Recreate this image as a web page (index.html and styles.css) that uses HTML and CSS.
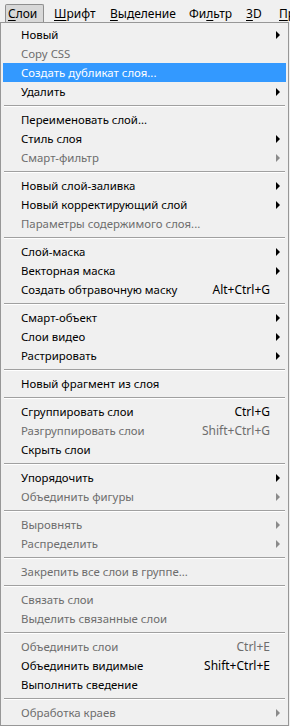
FILE: index.html
```html
<!DOCTYPE html>
<html>
<head>
	<meta charset="UTF-8">
	<title>Слои</title>
<link rel="stylesheet" href="styles.css">
</head>
<body>
<div class="menubar">
	<span class="tab open"><u>С</u>лои</span>
	<span class="tab t2"><u>Ш</u>рифт</span>
	<span class="tab t3"><u>В</u>ыделение</span>
	<span class="tab t4">Фи<u>л</u>ьтр</span>
	<span class="tab t5"><u>3</u>D</span>
	<span class="tab t6"><u>П</u>р</span>
</div>
<div class="menu">
	<div class="item sub"><span class="label">Новый</span><span class="key"></span><span class="arrow"></span></div>
	<div class="item off"><span class="label">Copy CSS</span><span class="key"></span><span class="arrow"></span></div>
	<div class="item hot"><span class="label">Создать дубликат слоя...</span><span class="key"></span><span class="arrow"></span></div>
	<div class="item sub"><span class="label">Удалить</span><span class="key"></span><span class="arrow"></span></div>
	<div class="sep"></div>
	<div class="item"><span class="label">Переименовать слой...</span><span class="key"></span><span class="arrow"></span></div>
	<div class="item sub"><span class="label">Стиль слоя</span><span class="key"></span><span class="arrow"></span></div>
	<div class="item sub off"><span class="label">Смарт-фильтр</span><span class="key"></span><span class="arrow"></span></div>
	<div class="sep"></div>
	<div class="item sub"><span class="label">Новый слой-заливка</span><span class="key"></span><span class="arrow"></span></div>
	<div class="item sub"><span class="label">Новый корректирующий слой</span><span class="key"></span><span class="arrow"></span></div>
	<div class="item off"><span class="label">Параметры содержимого слоя...</span><span class="key"></span><span class="arrow"></span></div>
	<div class="sep"></div>
	<div class="item sub"><span class="label">Слой-маска</span><span class="key"></span><span class="arrow"></span></div>
	<div class="item sub"><span class="label">Векторная маска</span><span class="key"></span><span class="arrow"></span></div>
	<div class="item"><span class="label">Создать обтравочную маску</span><span class="key">Alt+Ctrl+G</span><span class="arrow"></span></div>
	<div class="sep"></div>
	<div class="item sub"><span class="label">Смарт-объект</span><span class="key"></span><span class="arrow"></span></div>
	<div class="item sub"><span class="label">Слои видео</span><span class="key"></span><span class="arrow"></span></div>
	<div class="item sub"><span class="label">Растрировать</span><span class="key"></span><span class="arrow"></span></div>
	<div class="sep"></div>
	<div class="item"><span class="label">Новый фрагмент из слоя</span><span class="key"></span><span class="arrow"></span></div>
	<div class="sep"></div>
	<div class="item"><span class="label">Сгруппировать слои</span><span class="key">Ctrl+G</span><span class="arrow"></span></div>
	<div class="item off"><span class="label">Разгруппировать слои</span><span class="key">Shift+Ctrl+G</span><span class="arrow"></span></div>
	<div class="item"><span class="label">Скрыть слои</span><span class="key"></span><span class="arrow"></span></div>
	<div class="sep"></div>
	<div class="item sub"><span class="label">Упорядочить</span><span class="key"></span><span class="arrow"></span></div>
	<div class="item sub off"><span class="label">Объединить фигуры</span><span class="key"></span><span class="arrow"></span></div>
	<div class="sep"></div>
	<div class="item sub off"><span class="label">Выровнять</span><span class="key"></span><span class="arrow"></span></div>
	<div class="item sub off"><span class="label">Распределить</span><span class="key"></span><span class="arrow"></span></div>
	<div class="sep"></div>
	<div class="item off"><span class="label">Закрепить все слои в группе...</span><span class="key"></span><span class="arrow"></span></div>
	<div class="sep"></div>
	<div class="item off"><span class="label">Связать слои</span><span class="key"></span><span class="arrow"></span></div>
	<div class="item off"><span class="label">Выделить связанные слои</span><span class="key"></span><span class="arrow"></span></div>
	<div class="sep"></div>
	<div class="item off"><span class="label">Объединить слои</span><span class="key">Ctrl+E</span><span class="arrow"></span></div>
	<div class="item"><span class="label">Объединить видимые</span><span class="key">Shift+Ctrl+E</span><span class="arrow"></span></div>
	<div class="item"><span class="label">Выполнить сведение</span><span class="key"></span><span class="arrow"></span></div>
	<div class="sep"></div>
	<div class="item sub off"><span class="label">Обработка краев</span><span class="key"></span><span class="arrow"></span></div>
</div>
</body>
</html>
```

FILE: styles.css
```css
html{font:11.4px "Noto Sans","DejaVu Sans",sans-serif;color:#000;}
body{margin:0;width:290px;height:726px;overflow:hidden;background:#f0f0f0;}
.menubar{display:flex;height:22px;align-items:flex-end;white-space:nowrap;background:#f0f0f0;overflow:hidden;font-size:12px;}
.tab{display:block;flex:none;height:18px;line-height:17px;padding-left:9px;box-sizing:border-box;border:1px solid transparent;border-bottom:0;}
.tab.open{margin-left:5px;width:39px;padding-left:2px;background:#d8d8d8;border-color:#8f8f8f;border-radius:2px 2px 0 0;}
.t2{width:56px;}
.t3{width:79px;}
.t4{width:57px;}
.t5{width:33px;}
.t6{width:21px;}
.tab u{text-decoration:underline;text-underline-offset:2px;}
.menu{width:289px;height:704px;box-sizing:border-box;border:1px solid #979797;padding:2px 2px 0;background:#f0f0f0;}
.item{display:flex;height:19px;line-height:19px;align-items:center;padding-left:18px;white-space:nowrap;}
.item .label{flex:1;}
.item .key{padding-right:1px;font-size:12px;}
.item .arrow{width:15px;height:19px;position:relative;}
.item.sub .arrow:after{content:"";position:absolute;left:5px;top:6px;border-left:4px solid #000;border-top:4px solid transparent;border-bottom:4px solid transparent;}
.item.off{color:#6d6d6d;}
.item.off.sub .arrow:after{border-left-color:#8a8a8a;}
.item.hot{background:#3399ff;color:#fff;}
.sep{height:9px;position:relative;}
.sep:after{content:"";position:absolute;left:1px;right:1px;top:4px;height:1px;background:#a0a0a0;border-bottom:1px solid #fff;}
```
